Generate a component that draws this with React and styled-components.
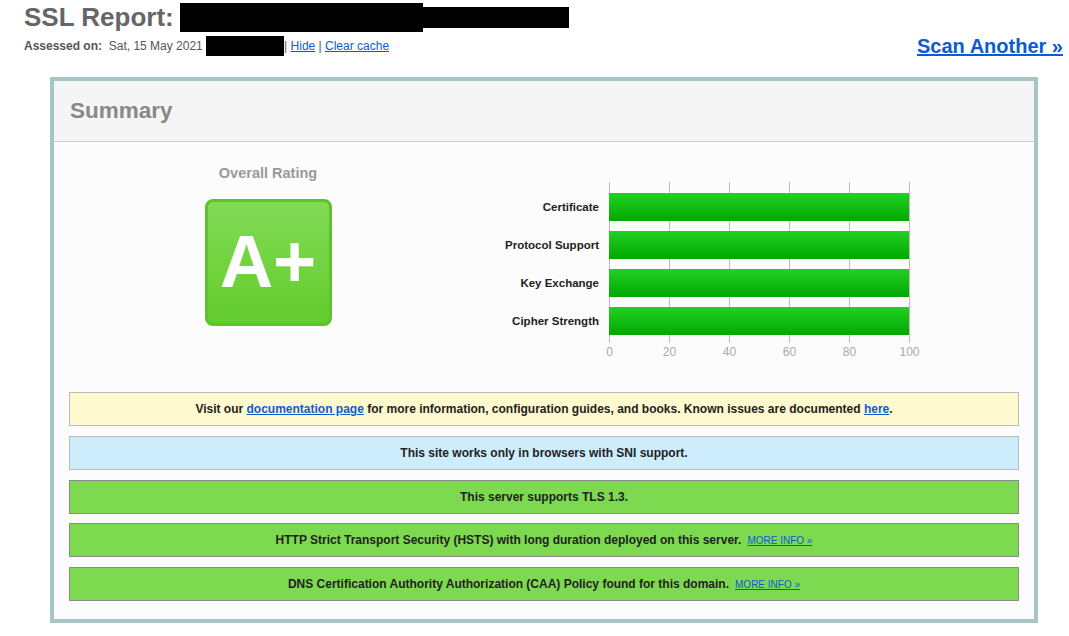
import React from 'react';
import styled, { createGlobalStyle } from 'styled-components';

const GlobalStyle = createGlobalStyle`
  body {
    margin: 0;
    background: #fff;
    font-family: "Liberation Sans", Arial, sans-serif;
    color: #333;
  }
`;

const Page = styled.div`
  width: 1069px;
`;

const Title = styled.h1`
  display: flex;
  align-items: center;
  margin: 0;
  padding: 1px 0 0 24px;
  height: 32px;
  font-size: 26px;
  line-height: 30px;
  font-weight: bold;
  color: #666;
`;

const Redacted = styled.span`
  display: inline-block;
  width: ${props => props.$w}px;
  height: ${props => props.$h}px;
  background: #000;
  vertical-align: middle;
`;

const TitleRedactions = styled.span`
  display: inline-flex;
  align-items: center;
  margin-left: 6px;
`;

const MetaRow = styled.div`
  display: flex;
  justify-content: space-between;
  align-items: center;
  height: 24px;
  margin-top: 1px;
  padding: 0 6px 0 24px;
`;

const Meta = styled.div`
  display: flex;
  align-items: center;
  font-size: 12px;
  color: #555;
  white-space: pre;
`;

const MetaLabel = styled.b`
  color: #555;
`;

const Link = styled.a`
  color: #0d5bd1;
  text-decoration: underline;
  cursor: pointer;
`;

const ScanAnother = styled(Link)`
  font-size: 20px;
  font-weight: bold;
`;

const Panel = styled.section`
  box-sizing: border-box;
  width: 988px;
  margin: 19px 0 0 50px;
  border: 4px solid #a6c5c7;
  background: #fcfcfc;
`;

const PanelHeader = styled.div`
  display: flex;
  align-items: center;
  height: 60px;
  padding-left: 16px;
  background: #f5f5f5;
  border-bottom: 1px solid #c5d2d2;
  font-size: 22.5px;
  font-weight: bold;
  color: #888;
`;

const PanelBody = styled.div`
  padding: 0 15px 18px;
`;

const TopSection = styled.div`
  display: flex;
  margin: 0 -15px 31px;
`;

const GradeColumn = styled.div`
  width: 428px;
  display: flex;
  flex-direction: column;
  align-items: center;
  padding-top: 22px;
`;

const GradeCaption = styled.div`
  font-size: 14.5px;
  line-height: 18px;
  font-weight: bold;
  color: #999;
`;

const GradeBox = styled.div`
  box-sizing: border-box;
  width: 127px;
  height: 127px;
  margin-top: 17px;
  display: flex;
  align-items: center;
  justify-content: center;
  border: 3px solid #5ec22b;
  border-radius: 8px;
  background: linear-gradient(to bottom, #82db55, #63cc2d);
  color: #fff;
  font-size: 74px;
  font-weight: bold;
  padding-bottom: 2px;
`;

const ChartColumn = styled.div`
  padding: 40px 0 0 2px;
`;

const Chart = styled.div`
  display: grid;
  grid-template-columns: 115px 301px;
  column-gap: 10px;
`;

const Labels = styled.div`
  display: flex;
  flex-direction: column;
  gap: 10px;
  padding-top: 11px;
`;

const Label = styled.div`
  height: 28px;
  display: flex;
  align-items: center;
  justify-content: flex-end;
  font-size: 11.5px;
  font-weight: bold;
  color: #222;
  white-space: nowrap;
`;

const Track = styled.div`
  display: flex;
  flex-direction: column;
  gap: 10px;
  padding: 11px 0 8px;
  background: repeating-linear-gradient(
    to right,
    #bdbdbd 0,
    #bdbdbd 1px,
    transparent 1px,
    transparent 60px
  );
`;

const Bar = styled.div`
  height: 28px;
  width: ${props => props.$value * 3}px;
  background: linear-gradient(to bottom, #24d024, #00a800);
`;

const Axis = styled.div`
  grid-column: 2;
  display: flex;
  justify-content: space-between;
  height: 18px;
`;

const Tick = styled.span`
  width: 1px;
  display: flex;
  justify-content: center;
  font-size: 12px;
  line-height: 18px;
  color: #aaa;
  white-space: nowrap;
`;

const Notices = styled.div`
  display: flex;
  flex-direction: column;
  gap: 9.75px;
`;

const tones = {
  warning: { bg: '#fff9d0', border: '#bbb' },
  info: { bg: '#cdedfd', border: '#bbb' },
  good: { bg: '#7dd94f', border: '#8a8a8a' },
};

const Notice = styled.div`
  box-sizing: border-box;
  height: 34px;
  display: flex;
  align-items: center;
  justify-content: center;
  background: ${props => tones[props.$tone].bg};
  border: 1px solid ${props => tones[props.$tone].border};
  font-size: 12px;
  font-weight: bold;
  color: #222;
  white-space: pre;
`;

const MoreInfo = styled(Link)`
  margin-left: 6px;
  font-size: 10px;
  font-weight: normal;
`;

const scores = [
  { label: 'Certificate', value: 100 },
  { label: 'Protocol Support', value: 100 },
  { label: 'Key Exchange', value: 100 },
  { label: 'Cipher Strength', value: 100 },
];

const ticks = [0, 20, 40, 60, 80, 100];

export default function App() {
  return (
    <Page>
      <GlobalStyle />
      <Title>
        SSL Report:
        <TitleRedactions>
          <Redacted $w={243} $h={29} />
          <Redacted $w={146} $h={21} />
        </TitleRedactions>
      </Title>

      <MetaRow>
        <Meta>
          <MetaLabel>Assessed on:</MetaLabel>
          {'  Sat, 15 May 2021 '}
          <Redacted $w={78} $h={20} />
          {'| '}
          <Link>Hide</Link>
          {' | '}
          <Link>Clear cache</Link>
        </Meta>
        <ScanAnother>Scan Another &raquo;</ScanAnother>
      </MetaRow>

      <Panel>
        <PanelHeader>Summary</PanelHeader>
        <PanelBody>
          <TopSection>
            <GradeColumn>
              <GradeCaption>Overall Rating</GradeCaption>
              <GradeBox>A+</GradeBox>
            </GradeColumn>
            <ChartColumn>
              <Chart>
                <Labels>
                  {scores.map(s => (
                    <Label key={s.label}>{s.label}</Label>
                  ))}
                </Labels>
                <Track>
                  {scores.map(s => (
                    <Bar key={s.label} $value={s.value} />
                  ))}
                </Track>
                <Axis>
                  {ticks.map(t => (
                    <Tick key={t}>{t}</Tick>
                  ))}
                </Axis>
              </Chart>
            </ChartColumn>
          </TopSection>

          <Notices>
            <Notice $tone="warning">
              {'Visit our '}
              <Link>documentation page</Link>
              {' for more information, configuration guides, and books. Known issues are documented '}
              <Link>here</Link>.
            </Notice>
            <Notice $tone="info">This site works only in browsers with SNI support.</Notice>
            <Notice $tone="good">This server supports TLS 1.3.</Notice>
            <Notice $tone="good">
              HTTP Strict Transport Security (HSTS) with long duration deployed on this server.
              <MoreInfo>MORE INFO &raquo;</MoreInfo>
            </Notice>
            <Notice $tone="good">
              DNS Certification Authority Authorization (CAA) Policy found for this domain.
              <MoreInfo>MORE INFO &raquo;</MoreInfo>
            </Notice>
          </Notices>
        </PanelBody>
      </Panel>
    </Page>
  );
}
